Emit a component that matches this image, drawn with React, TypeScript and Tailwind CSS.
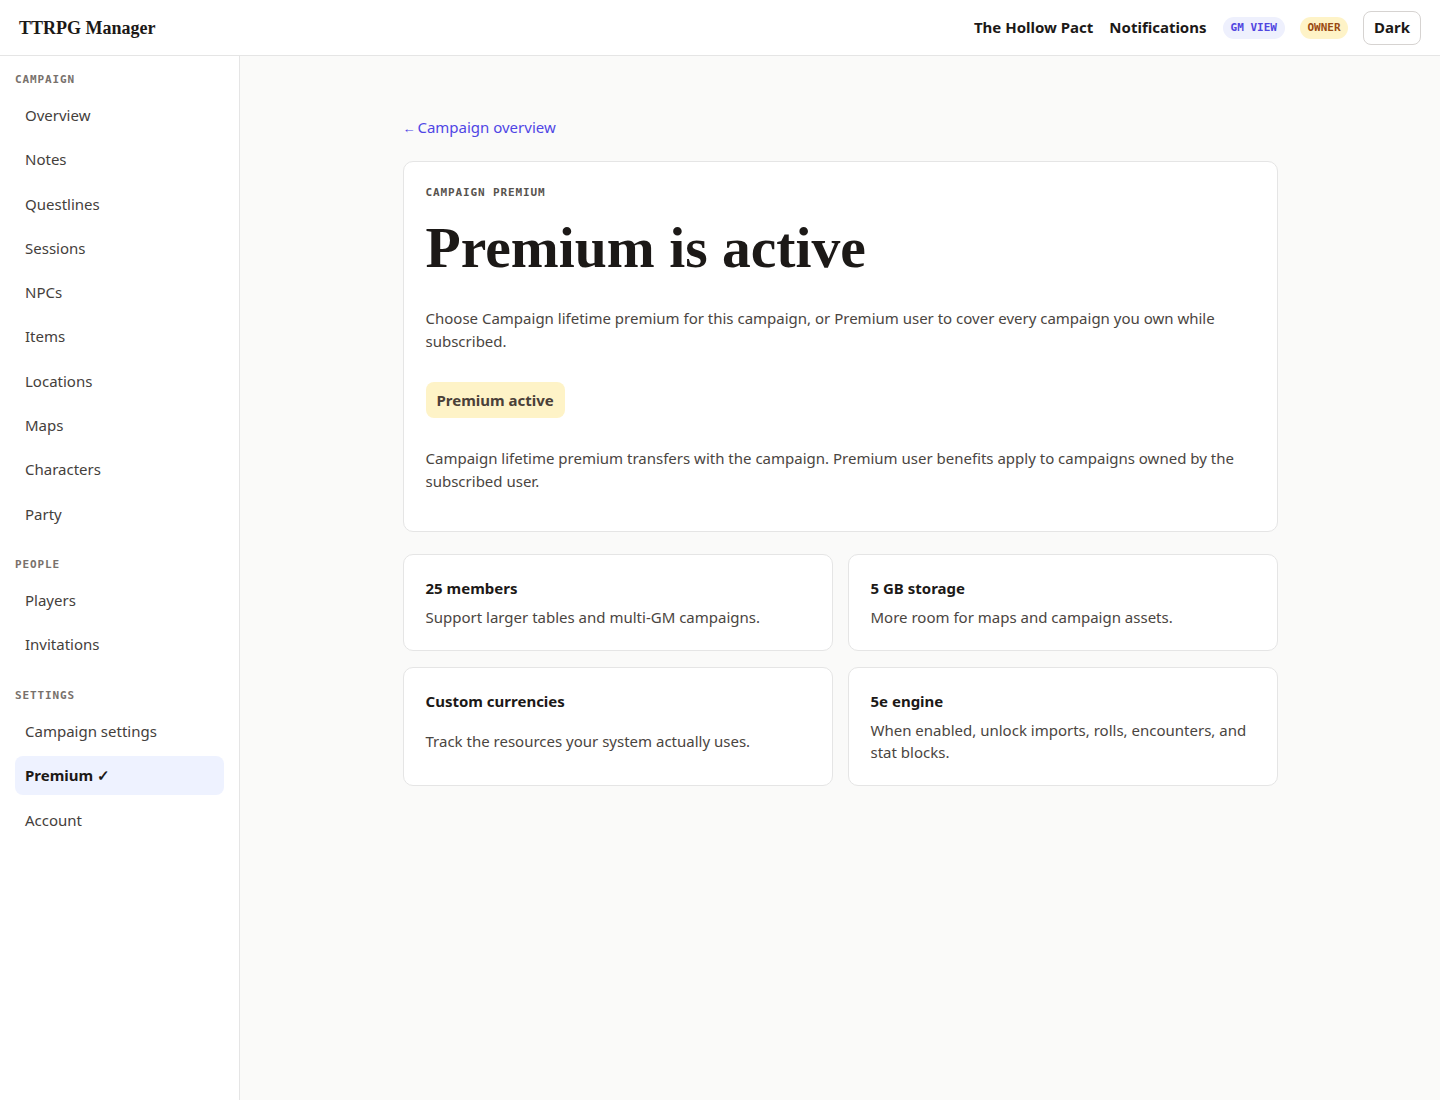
import React from "react";

const sans = { fontFamily: '"Noto Sans", "Open Sans", sans-serif' };
const mono = { fontFamily: '"DejaVu Sans Mono", "Liberation Mono", monospace' };
const serif = { fontFamily: '"Liberation Serif", "Times New Roman", serif' };

const sections: { label: string; items: string[] }[] = [
  {
    label: "CAMPAIGN",
    items: ["Overview", "Notes", "Questlines", "Sessions", "NPCs", "Items", "Locations", "Maps", "Characters", "Party"],
  },
  { label: "PEOPLE", items: ["Players", "Invitations"] },
  { label: "SETTINGS", items: ["Campaign settings", "Premium ✓", "Account"] },
];

const features = [
  { title: "25 members", desc: "Support larger tables and multi-GM campaigns." },
  { title: "5 GB storage", desc: "More room for maps and campaign assets." },
  { title: "Custom currencies", desc: "Track the resources your system actually uses." },
  { title: "5e engine", desc: "When enabled, unlock imports, rolls, encounters, and stat blocks." },
];

export default function App() {
  return (
    <div className="min-h-[1100px] flex flex-col bg-[#fafaf9] text-[#1c1917]" style={sans}>
      <header className="h-[56px] shrink-0 flex items-center justify-between px-[19px] bg-white border-b border-[#e5e5e5]">
        <div className="text-[18px] font-bold leading-none" style={serif}>
          TTRPG Manager
        </div>
        <div className="flex items-center gap-4">
          <span className="text-[15px] font-bold text-[#1c1917]">The Hollow Pact</span>
          <span className="text-[15px] font-bold text-[#1c1917]">Notifications</span>
          <span
            className="rounded-full bg-[#eef0fd] text-[#5045e0] text-[11px] font-bold leading-[16px] py-[3px] px-[8px]"
            style={mono}
          >
            GM VIEW
          </span>
          <span
            className="-ml-[1px] rounded-full bg-[#fef3c7] text-[#9a4a12] text-[11px] font-bold leading-[16px] py-[3px] px-[7.5px]"
            style={mono}
          >
            OWNER
          </span>
          <button className="-ml-[1px] h-[34px] px-[10px] rounded-lg border border-[#d6d3d1] bg-white text-[15px] font-bold text-[#1c1917]">
            Dark
          </button>
        </div>
      </header>

      <div className="flex flex-1">
        <aside className="w-[240px] shrink-0 bg-white border-r border-[#e5e5e5] px-[15px] pt-[16px] pb-6 flex flex-col gap-[24px]">
          {sections.map((s) => (
            <div key={s.label} className="flex flex-col">
              <div
                className="text-[11px] font-bold leading-[16px] tracking-[0.08em] text-[#78716c] mb-[8px]"
                style={mono}
              >
                {s.label}
              </div>
              <div className="flex flex-col gap-[5.8px]">
                {s.items.map((it) => {
                  const active = it.startsWith("Premium");
                  return (
                    <div
                      key={it}
                      className={
                        active
                          ? "rounded-lg bg-[#eef2ff] px-[10px] py-2 text-[15px] leading-[22.5px] font-bold text-[#1c1917]"
                          : "rounded-lg px-[10px] py-2 text-[15px] leading-[22.5px] text-[#44403c]"
                      }
                    >
                      {it}
                    </div>
                  );
                })}
              </div>
            </div>
          ))}
        </aside>

        <main className="flex-1 pt-[60px] pb-10">
          <div className="w-[875px] mx-auto">
            <div className="text-[15px] leading-[22px] text-[#4f46e5]">
              <span className="text-[13px] mr-[-2px]">←</span> Campaign overview
            </div>

            <section className="mt-[22px] bg-white border border-[#e5e5e5] rounded-[10px] p-[22px] pb-[38px]">
              <div className="text-[11px] font-bold leading-[18px] tracking-[0.08em] text-[#57534e]" style={mono}>
                CAMPAIGN PREMIUM
              </div>
              <h1 className="mt-[14px] text-[57.6px] font-bold leading-[64px] text-[#1c1917]" style={serif}>
                Premium is active
              </h1>
              <p className="mt-[27px] text-[15px] leading-[23px] text-[#4a4541]">
                Choose Campaign lifetime premium for this campaign, or Premium user to cover every campaign you own while subscribed.
              </p>
              <div className="mt-[29px] inline-flex h-[36px] items-center px-[11px] rounded-lg bg-[#fef3c7] text-[15px] font-bold text-[#4a4038]">
                Premium active
              </div>
              <p className="mt-[29px] text-[15px] leading-[23px] text-[#4a4541]">
                Campaign lifetime premium transfers with the campaign. Premium user benefits apply to campaigns owned by the subscribed user.
              </p>
            </section>

            <div className="mt-[22px] grid grid-cols-2 gap-x-[15px] gap-y-[16px]">
              {features.map((f) => (
                <div key={f.title} className="grid gap-[6px] bg-white border border-[#e5e5e5] rounded-[10px] p-[22px]">
                  <div className="text-[15px] font-bold leading-[23px] text-[#1c1917]">{f.title}</div>
                  <div className="text-[15px] leading-[22px] text-[#4a4541]">{f.desc}</div>
                </div>
              ))}
            </div>
          </div>
        </main>
      </div>
    </div>
  );
}
